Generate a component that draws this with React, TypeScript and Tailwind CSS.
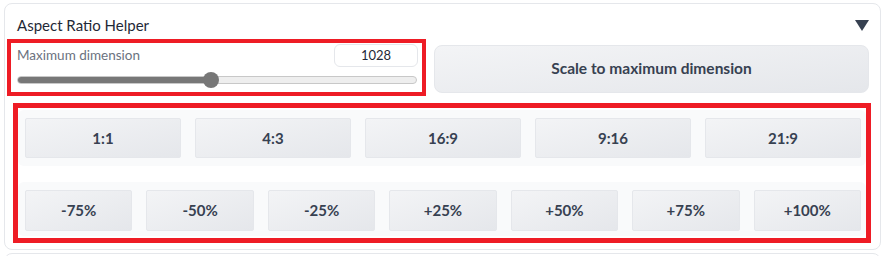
import React from 'react';

const ratios = ['1:1', '4:3', '16:9', '9:16', '21:9'];
const scales = ['-75%', '-50%', '-25%', '+25%', '+50%', '+75%', '+100%'];

const btn =
  'flex-1 flex items-center justify-center rounded-[2px] border border-[#e5e7eb] bg-gradient-to-br from-[#f3f4f6] to-[#e5e7eb] text-[15px] font-bold text-[#374151]';

const App = () => {
  const value = 1028;
  const pct = 48.6;

  return (
    <div className="w-[890px] h-[256px] bg-white overflow-hidden font-['Lato',sans-serif]">
      <div className="ml-[4px] mt-[3px] w-[877px] h-[247px] border border-[#e5e7eb] rounded-lg">
        {/* Header */}
        <div className="h-[35px] flex items-center justify-between pl-[12px] pr-[11px]">
          <span className="text-[15px] text-[#1f2937] mt-[8px]">Aspect Ratio Helper</span>
          <svg width="14" height="11" viewBox="0 0 14 11" className="mt-[8px]">
            <polygon points="0,0 14,0 7,11" fill="#374151" />
          </svg>
        </div>

        {/* Slider + scale button */}
        <div className="ml-[2px] flex gap-[8px]">
          <div className="w-[419px] h-[57px] border-4 border-[#ee1c25] pl-[6px] pr-[4px] pt-[1px]">
            <div className="flex items-start justify-between">
              <span className="text-[13.5px] text-[#6b7280] mt-[1px]">Maximum dimension</span>
              <div className="w-[84px] h-[23px] rounded-md border border-[#e5e7eb] flex items-center justify-center text-[13px] text-[#1f2937]">
                {value}
              </div>
            </div>
            <div className="relative mt-[9px] mr-[1px] h-[8px] rounded-full border border-[#c8c8c8] bg-[#eeeeee]">
              <div className="h-full rounded-l-full bg-[#777777]" style={{ width: `${pct}%` }} />
              <div
                className="absolute top-1/2 w-[16px] h-[16px] -mt-[8px] -ml-[8px] rounded-full bg-[#777777]"
                style={{ left: `${pct}%` }}
              />
            </div>
          </div>
          <button className="mt-[6px] w-[435px] h-[48px] rounded-lg border border-[#e5e7eb] bg-gradient-to-br from-[#f3f4f6] to-[#e5e7eb] text-[15.5px] font-bold text-[#374151]">
            Scale to maximum dimension
          </button>
        </div>

        {/* Ratio and scale rows */}
        <div className="ml-[8px] mt-[7px] w-[858px] h-[140px] border-[5px] border-[#ee1c25] pt-[2px]">
          <div className="bg-[#f9fafb] rounded-md pl-[7px] pr-[5px] pt-[8px] pb-[8px] flex gap-[14px]">
            {ratios.map((r) => (
              <button key={r} className={btn + ' h-[40px]'}>
                {r}
              </button>
            ))}
          </div>
          <div className="mt-[16px] bg-[#f9fafb] rounded-md pl-[7px] pr-[5px] pt-[8px] pb-[5px] flex gap-[14px]">
            {scales.map((s) => (
              <button key={s} className={btn + ' h-[41px]'}>
                {s}
              </button>
            ))}
          </div>
        </div>
      </div>
      <div className="ml-[4px] mt-[3px] w-[877px] h-[20px] border border-[#e5e7eb] rounded-t-lg" />
    </div>
  );
};

export default App;
